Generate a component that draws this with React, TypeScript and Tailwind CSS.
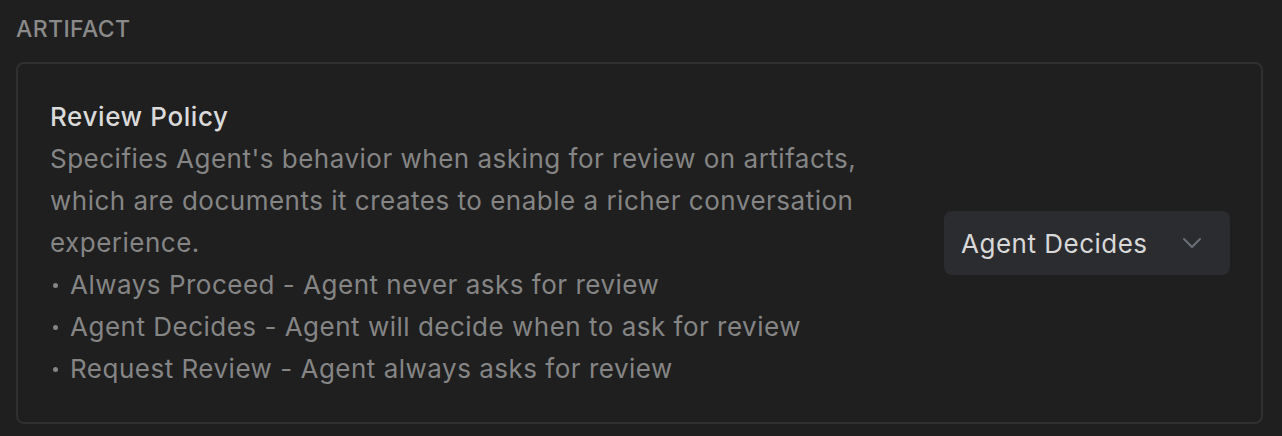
import React from "react";

function Bullet({ children }: { children: React.ReactNode }) {
  return (
    <div className="flex">
      <span className="w-[20px] shrink-0 flex items-center pl-[3px]">
        <span className="w-[5px] h-[5px] rounded-full bg-[#858585]" />
      </span>
      <span>{children}</span>
    </div>
  );
}

export default function App() {
  return (
    <div
      className="w-[1282px] h-[436px] bg-[#1f1f1f] px-[16px] pt-[14px] overflow-hidden"
      style={{ fontFamily: "Inter, 'Noto Sans', sans-serif" }}
    >
      <div className="text-[23px] leading-[30px] font-medium text-[#8a8a8a] tracking-[0.4px]">
        ARTIFACT
      </div>
      <div className="mt-[18px] w-[1247px] rounded-[8px] border-2 border-[#303030] bg-[#1f1f1f] pl-[32px] pr-[31px] pt-[32px] pb-[32px] flex items-center gap-[40px]">
        <div className="flex-1 text-[26px] leading-[42px] text-[#858585] tracking-[0.5px]">
          <div className="font-medium text-[#dadada] tracking-[0.6px]">Review Policy</div>
          <div className="max-w-[840px]">
            Specifies Agent's behavior when asking for review on artifacts, which are documents it creates to enable a richer conversation experience.
          </div>
          <Bullet>Always Proceed - Agent never asks for review</Bullet>
          <Bullet>Agent Decides - Agent will decide when to ask for review</Bullet>
          <Bullet>Request Review - Agent always asks for review</Bullet>
        </div>
        <button className="w-[286px] h-[64px] rounded-[8px] bg-[#2b2c2f] pl-[17px] pr-[28px] flex items-center justify-between text-[26px] text-[#d8d8d8] tracking-[0.5px]">
          <span>Agent Decides</span>
          <svg width="20" height="12" viewBox="0 0 20 12" fill="none">
            <path d="M2 2l8 8 8-8" stroke="#6b6f78" strokeWidth="2" strokeLinecap="round" strokeLinejoin="round" />
          </svg>
        </button>
      </div>
    </div>
  );
}
